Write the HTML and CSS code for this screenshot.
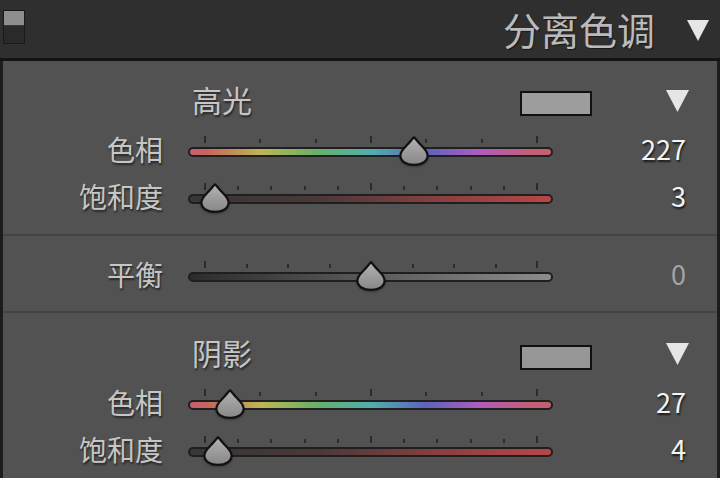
FILE: index.html
```html
<!DOCTYPE html>
<html lang="zh">
<head>
<meta charset="utf-8">
<title>分离色调</title>
<link rel="stylesheet" href="styles.css">
</head>
<body>
<div class="app">
  <header class="header">
    <div class="toggle"><span class="toggle-on"></span></div>
    <h1 class="title">分离色调</h1>
    <svg class="tri tri-lg" viewBox="0 0 24 24"><path d="M1 2 H23 L12 23 Z"/></svg>
  </header>
  <main class="panel">
    <section class="section">
      <div class="section-head">
        <span class="section-title">高光</span>
        <span class="swatch"></span>
        <svg class="tri tri-sm" viewBox="0 0 24 24"><path d="M0.5 1 H23.5 L12 23 Z"/></svg>
      </div>
      <div class="row">
        <span class="label">色相</span>
        <div class="slider">
          <div class="ticks"><i class="tall"></i><i></i><i></i><i class="tall"></i><i></i><i></i><i class="tall"></i></div>
          <div class="track hue"></div>
          <svg class="thumb" style="left:211px" viewBox="0 0 30 30"><use href="#drop"/></svg>
        </div>
        <span class="value">227</span>
      </div>
      <div class="row">
        <span class="label">饱和度</span>
        <div class="slider">
          <div class="ticks"><i class="tall"></i><i></i><i></i><i></i><i></i><i class="tall"></i><i></i><i></i><i></i><i></i><i class="tall"></i></div>
          <div class="track sat"></div>
          <svg class="thumb" style="left:12px" viewBox="0 0 30 30"><use href="#drop"/></svg>
        </div>
        <span class="value">3</span>
      </div>
    </section>
    <section class="section section-bal">
      <div class="row">
        <span class="label">平衡</span>
        <div class="slider">
          <div class="ticks"><i class="tall"></i><i></i><i></i><i></i><i class="tall"></i><i></i><i></i><i></i><i class="tall"></i></div>
          <div class="track bal"></div>
          <svg class="thumb" style="left:168px" viewBox="0 0 30 30"><use href="#drop"/></svg>
        </div>
        <span class="value dim">0</span>
      </div>
    </section>
    <section class="section section-last">
      <div class="section-head">
        <span class="section-title">阴影</span>
        <span class="swatch swatch-dark"></span>
        <svg class="tri tri-sm" viewBox="0 0 24 24"><path d="M0.5 1 H23.5 L12 23 Z"/></svg>
      </div>
      <div class="row">
        <span class="label">色相</span>
        <div class="slider">
          <div class="ticks"><i class="tall"></i><i></i><i></i><i class="tall"></i><i></i><i></i><i class="tall"></i></div>
          <div class="track hue"></div>
          <svg class="thumb" style="left:27px" viewBox="0 0 30 30"><use href="#drop"/></svg>
        </div>
        <span class="value">27</span>
      </div>
      <div class="row">
        <span class="label">饱和度</span>
        <div class="slider">
          <div class="ticks"><i class="tall"></i><i></i><i></i><i></i><i></i><i class="tall"></i><i></i><i></i><i></i><i></i><i class="tall"></i></div>
          <div class="track sat"></div>
          <svg class="thumb" style="left:15px" viewBox="0 0 30 30"><use href="#drop"/></svg>
        </div>
        <span class="value">4</span>
      </div>
    </section>
  </main>
</div>
<svg class="defs" width="0" height="0">
  <defs>
    <linearGradient id="dropfill" x1="0" y1="0" x2="0" y2="1">
      <stop offset="0" stop-color="#b2b2b2"/>
      <stop offset="1" stop-color="#878787"/>
    </linearGradient>
    <path id="drop" d="M15 1.3 C16.6 2.8 18.3 5 21.2 8.3 C25.2 12.6 28.6 14.8 28.6 19.6 C28.6 25.6 22.6 28.8 15 28.8 C7.4 28.8 1.4 25.6 1.4 19.6 C1.4 14.8 4.8 12.6 8.8 8.3 C11.7 5 13.4 2.8 15 1.3 Z" fill="url(#dropfill)" stroke="#111" stroke-width="2.2" stroke-linejoin="round"/>
  </defs>
</svg>
</body>
</html>
```
FILE: styles.css
```css
* { box-sizing: border-box; }
html, body { margin: 0; padding: 0; }
body {
  width: 720px;
  height: 478px;
  overflow: hidden;
  background: #525252;
  font-family: "Noto Sans CJK SC", "Noto Sans", sans-serif;
}
.app { width: 720px; height: 478px; display: flex; flex-direction: column; }

.header {
  height: 61px;
  flex: none;
  background: #2f2f2f;
  border-bottom: 3px solid #131313;
  display: flex;
  align-items: center;
  padding: 0 10px 0 3px;
}
.toggle {
  width: 22px;
  height: 34px;
  margin-top: -4px;
  border: 1px solid #191919;
  background: #2a2a2a;
  display: flex;
  flex-direction: column;
}
.toggle-on { height: 15px; background: #8e8e8e; border-bottom: 1px solid #3a3a3a; }
.title {
  margin: 0 31px 0 auto;
  font-size: 38px;
  font-weight: 400;
  line-height: 1;
  color: #bababa;
  text-shadow: 1px 1px 1px rgba(0,0,0,0.5);
}
.tri { display: block; fill: #e6e6e6; }
.tri-lg { width: 24px; height: 24px; margin-top: 1px; }
.tri-sm { width: 25px; height: 24px; margin-left: 73px; }

.panel {
  flex: 1;
  background: #525252;
  border-left: 3px solid #1c1c1c;
  border-right: 3px solid #1c1c1c;
  display: flex;
  flex-direction: column;
}
.section {
  padding: 20px 0 19px;
  border-bottom: 2px solid #424242;
}
.section-bal { padding: 10px 0 18px; }
.section-last { padding-top: 21px; border-bottom: 0; }

.section-head {
  height: 40px;
  display: flex;
  align-items: center;
  padding: 0 27px 0 189px;
}
.section-title {
  font-size: 30px;
  line-height: 40px;
  margin-top: -4px;
  color: #c6c6c6;
  text-shadow: 1px 2px 2px rgba(0,0,0,0.55);
}
.swatch {
  margin-left: auto;
  width: 72px;
  height: 25px;
  border: 2px solid #111;
  background: #9d9d9d;
  margin-top: 4px;
}
.swatch-dark { background: #979797; margin-top: 6px; }

.row {
  height: 47px;
  display: grid;
  grid-template-columns: 160px 365px 108px;
  column-gap: 25px;
  align-items: start;
}
.label, .value {
  margin-top: 13px;
  font-size: 28px;
  line-height: 30px;
  text-align: right;
  white-space: nowrap;
}
.label { color: #c6c6c6; text-shadow: 1px 2px 2px rgba(0,0,0,0.55); }
.value { color: #f4f4f4; font-size: 27px; text-shadow: 1px 2px 2px rgba(0,0,0,0.7); }
.value.dim { color: #a4a4a4; text-shadow: none; }

.slider {
  position: relative;
  height: 47px;
  padding-top: 15px;
}
.ticks {
  height: 7px;
  margin: 0 15px 4px 16px;
  display: flex;
  justify-content: space-between;
  align-items: flex-end;
}
.ticks i {
  display: block;
  width: 2px;
  height: 4px;
  background: #2b2b2b;
}
.ticks i.tall { height: 7px; }

.track {
  height: 10px;
  border: 2px solid #1f1f1f;
  border-radius: 5px;
}
.hue {
  background: linear-gradient(to right,
    #c95e6c 0%, #c8665e 4.7%, #bcb654 19.8%, #68b068 34.9%,
    #52aeae 50.1%, #5c64bc 65.2%, #b05cbc 80.3%, #c45e74 95.3%, #c65e70 100%);
}
.sat { background: linear-gradient(to right, #383636 0%, #4a3838 35%, #8a4040 70%, #b84646 100%); }
.bal { background: linear-gradient(to right, #2c2c2c 0%, #5a5a5a 50%, #8c8c8c 100%); }

.thumb {
  position: absolute;
  top: 15px;
  width: 30px;
  height: 30px;
  filter: drop-shadow(0 1px 1px rgba(0,0,0,0.3));
}
.defs { position: absolute; width: 0; height: 0; overflow: hidden; }
```
